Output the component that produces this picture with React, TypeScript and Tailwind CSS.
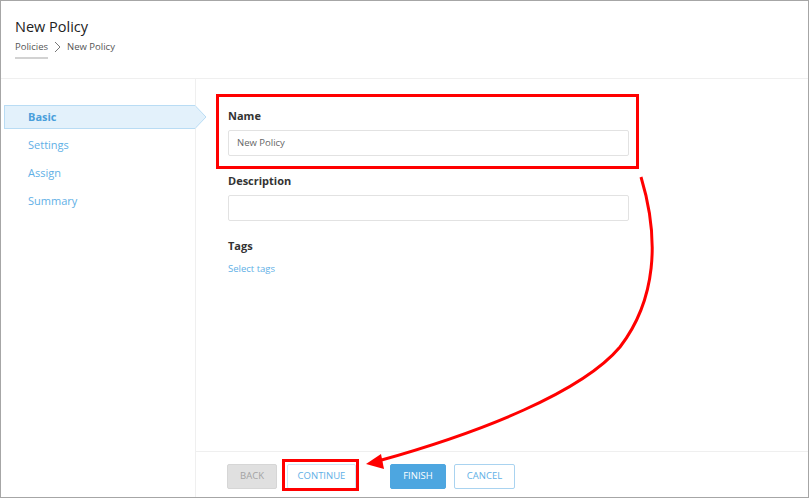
import React from "react";

const navItems = ["Settings", "Assign", "Summary"];

const Field = ({ label, value }: { label: string; value?: string }) => (
  <div className="mb-[17px]">
    <div className="text-[11px] leading-[16px] font-bold text-[#333]">{label}</div>
    <div className="mt-[6px] w-[401px] h-[26px] rounded-[2px] border border-[#e2e2e2] flex items-center px-[8px] text-[9.5px] text-[#666]">
      {value}
    </div>
  </div>
);

const App: React.FC = () => {
  return (
    <div
      className="relative w-[809px] h-[498px] bg-white border border-[#a6a6a6] flex flex-col overflow-hidden"
      style={{ fontFamily: '"Open Sans", "Noto Sans", sans-serif' }}
    >
      {/* header */}
      <div className="h-[78px] shrink-0 border-b border-[#efefef] pl-[14px] pt-[15px]">
        <div className="text-[14.5px] leading-[22px] text-[#222]">New Policy</div>
        <div className="mt-[2px] flex items-center gap-[4px] text-[9.5px] leading-[14px] text-[#555]">
          <span className="relative">
            Policies
            <span className="absolute left-0 right-0 -bottom-[5px] h-[2px] bg-[#d2d2d2]" />
          </span>
          <svg width="9" height="12" viewBox="0 0 9 12" className="mx-[1px]">
            <path d="M2 1 L7 6 L2 11" fill="none" stroke="#777" strokeWidth="1" />
          </svg>
          <span>New Policy</span>
        </div>
      </div>

      <div className="flex flex-1 min-h-0">
        {/* left nav */}
        <div className="w-[195px] shrink-0 border-r border-[#efefef] pt-[26px] pl-[3px]">
          <div className="relative h-[24px] bg-[#e3f1fb] border border-[#b9dcf4] border-r-0 flex items-center pl-[23px] text-[11px] font-bold text-[#4a9fdb]">
            Basic
            <svg width="13" height="24" viewBox="0 0 13 24" className="absolute -right-[12px] -top-[1px]">
              <polygon points="0,0.5 1,0.5 12,12 1,23.5 0,23.5" fill="#e3f1fb" stroke="#b9dcf4" strokeWidth="1" />
              <rect x="0" y="1" width="1.5" height="22" fill="#e3f1fb" />
            </svg>
          </div>
          <div className="mt-[2px]">
            {navItems.map((item) => (
              <div key={item} className="h-[28px] flex items-center pl-[24px] text-[11px] text-[#5fb0e6]">
                {item}
              </div>
            ))}
          </div>
        </div>

        {/* main */}
        <div className="flex-1 flex flex-col">
          <div className="flex-1 pl-[32px] pt-[29px]">
            <Field label="Name" value="New Policy" />
            <Field label="Description" />
            <div className="text-[11px] leading-[16px] font-bold text-[#333] mt-[1px]">Tags</div>
            <div className="mt-[8px] text-[9.5px] text-[#5fb0e6]">Select tags</div>
          </div>
          <div className="h-[46px] shrink-0 border-t border-[#efefef] flex items-start pt-[12px] pl-[31px] text-[9.5px]">
            <button className="w-[50px] h-[25px] rounded-[2px] bg-[#e0e0e0] border border-[#d6d6d6] text-[#a3a3a3]">BACK</button>
            <button className="ml-[10px] w-[69px] h-[25px] rounded-[2px] bg-white border border-[#cfe6f7] text-[#5fb0e6]">CONTINUE</button>
            <button className="ml-[34px] w-[56px] h-[25px] rounded-[2px] bg-[#4da6e0] border border-[#4da6e0] text-white">FINISH</button>
            <button className="ml-[8px] w-[61px] h-[25px] rounded-[2px] bg-white border border-[#a9d3f0] text-[#5fb0e6]">CANCEL</button>
          </div>
        </div>
      </div>

      {/* annotation overlay */}
      <svg
        className="absolute left-[-1px] top-[-1px] pointer-events-none"
        width="809"
        height="498"
        viewBox="0 0 809 498"
      >
        <rect x="217.5" y="95.5" width="420" height="72" fill="none" stroke="#ff0000" strokeWidth="3" />
        <rect x="283.5" y="460.5" width="74" height="29" fill="none" stroke="#ff0000" strokeWidth="3" />
        <path
          d="M641 177 C660 240, 656 300, 620 347 C582 392, 482 432, 378 461"
          fill="none"
          stroke="#ff0000"
          strokeWidth="3"
        />
        <polygon points="366,464 381,454 384,469" fill="#ff0000" />
      </svg>
    </div>
  );
};

export default App;
